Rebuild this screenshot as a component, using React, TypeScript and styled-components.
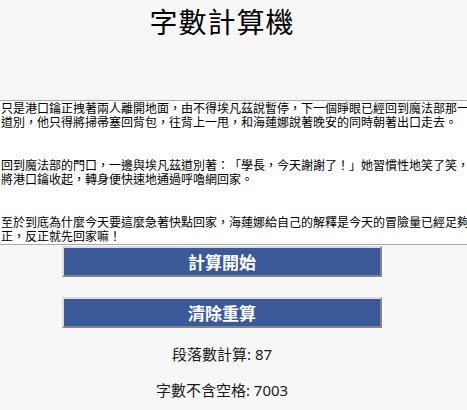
import React, { useState } from 'react';
import styled, { createGlobalStyle } from 'styled-components';

const GlobalStyle = createGlobalStyle`
  html, body {
    margin: 0;
    padding: 0;
    background: #f7f7f7;
    overflow: hidden;
  }
  body {
    font-family: "Noto Sans", "Noto Sans CJK TC", sans-serif;
    text-spacing-trim: space-all;
  }
`;

const Page = styled.div`
  width: 444px;
  display: flex;
  flex-direction: column;
  align-items: center;
  color: #000;
`;

const Title = styled.h1`
  margin: 0 0 58px;
  font-family: "Noto Sans CJK TC", sans-serif;
  font-size: 28px;
  line-height: 42px;
  font-weight: 400;
  letter-spacing: 1px;
`;

const Editor = styled.textarea`
  align-self: flex-start;
  display: block;
  box-sizing: content-box;
  width: 474px;
  height: 143px;
  margin: 0;
  padding: 0 0 0 1px;
  border: none;
  border-top: 1px solid #a9a9a9;
  border-bottom: 1px solid #a9a9a9;
  background: #fff;
  color: #000;
  font-family: "Noto Sans CJK TC", sans-serif;
  font-size: 12px;
  line-height: 14.2px;
  text-spacing-trim: space-all;
  resize: none;
  overflow: hidden;
  outline: none;
`;

const Actions = styled.div`
  display: flex;
  flex-direction: column;
  align-items: center;
  gap: 20px;
  margin-top: 1px;
`;

const ActionButton = styled.button`
  box-sizing: border-box;
  width: 320px;
  height: 31px;
  padding: 0;
  background: #3b5998;
  color: #fff;
  border: 2px solid;
  border-color: #dcdcdc #858585 #858585 #dcdcdc;
  font-family: "Noto Sans CJK TC", sans-serif;
  font-size: 17px;
  font-weight: 700;
  line-height: 1;
  cursor: pointer;
`;

const Stats = styled.div`
  display: flex;
  flex-direction: column;
  align-items: center;
  gap: 15.5px;
  margin-top: 16px;
`;

const Stat = styled.p`
  margin: 0;
  font-size: 15px;
  line-height: 20px;
  color: #1a1a1a;
`;

const sample = [
  '只是港口鑰正拽著兩人離開地面，由不得埃凡茲說暫停，下一個睜眼已經回到魔法部那一道別，他只得將掃帚塞回背包，往背上一甩，和海蓮娜說著晚安的同時朝著出口走去。',
  '回到魔法部的門口，一邊與埃凡茲道別著：「學長，今天謝謝了！」她習慣性地笑了笑，將港口鑰收起，轉身便快速地通過呼嚕網回家。',
  '至於到底為什麼今天要這麼急著快點回家，海蓮娜給自己的解釋是今天的冒險量已經足夠正，反正就先回家嘛！',
  '她踏出壁爐，拍掉身上的灰燼，屋裡一片安靜。',
].join('\n\n\n');

export default function App() {
  const [text, setText] = useState(sample);
  const [paragraphs, setParagraphs] = useState(87);
  const [chars, setChars] = useState(7003);

  const count = () => {
    setParagraphs(text.split(/\n+/).filter((p) => p.trim()).length);
    setChars(text.replace(/\s/g, '').length);
  };

  const clear = () => {
    setText('');
    setParagraphs(0);
    setChars(0);
  };

  return (
    <>
      <GlobalStyle />
      <Page>
        <Title>字數計算機</Title>
        <Editor value={text} onChange={(e) => setText(e.target.value)} />
        <Actions>
          <ActionButton onClick={count}>計算開始</ActionButton>
          <ActionButton onClick={clear}>清除重算</ActionButton>
        </Actions>
        <Stats>
          <Stat>段落數計算: {paragraphs}</Stat>
          <Stat>字數不含空格: {chars}</Stat>
        </Stats>
      </Page>
    </>
  );
}
